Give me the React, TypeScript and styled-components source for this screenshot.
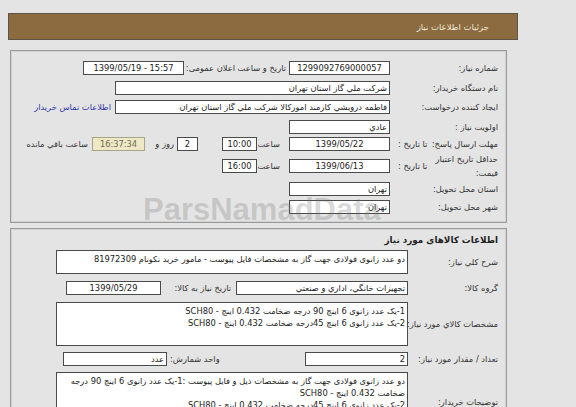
import React from 'react';
import styled, { createGlobalStyle } from 'styled-components';

const GlobalStyle = createGlobalStyle`
    html, body {
        margin: 0;
        padding: 0;
        background: #e4e4e4;
        overflow: hidden;
    }
    body {
        font-family: Tahoma, "DejaVu Sans", sans-serif;
        font-size: 8.3px;
        color: #333;
    }
`;

const App: React.FC = () => {
    return (
        <>
            <GlobalStyle />
            <Page dir="rtl">
                <TitleBar>جزئيات اطلاعات نياز</TitleBar>

                <Panel>
                    <Row h={20}>
                        <Label>شماره نياز:</Label>
                        <Field w={101} center>1299092769000057</Field>
                        <InlineLabel w={105}>تاريخ و ساعت اعلان عمومی:</InlineLabel>
                        <Field w={101} center dir="ltr">1399/05/19 - 15:57</Field>
                    </Row>
                    <Row h={19}>
                        <Label>نام دستگاه خريدار:</Label>
                        <Field w={275}>شرکت ملي گاز استان تهران</Field>
                    </Row>
                    <Row h={20}>
                        <Label>ايجاد کننده درخواست:</Label>
                        <Field w={275}>فاطمه درويشي كارمند اموركالا شركت ملي گاز استان تهران</Field>
                        <Link>اطلاعات تماس خريدار</Link>
                    </Row>
                    <Row h={19}>
                        <Label>اولويت نياز :</Label>
                        <Field w={101}>عادي</Field>
                    </Row>
                    <Row h={16}>
                        <Label>
                            مهلت ارسال پاسخ:
                            <SubLabel>تا تاريخ :</SubLabel>
                        </Label>
                        <Field w={101} center>1399/05/22</Field>
                        <InlineLabel w={32} pad={9}>ساعت</InlineLabel>
                        <Field w={35} center>10:00</Field>
                        <Spacer w={24} />
                        <Field w={21} center>2</Field>
                        <InlineLabel w={32} pad={3}>روز و</InlineLabel>
                        <Countdown>16:37:34</Countdown>
                        <InlineLabel pad={4}>ساعت باقي مانده</InlineLabel>
                    </Row>
                    <Row h={28}>
                        <Label>
                            <TwoLine>حداقل تاريخ اعتبار<br />قيمت:</TwoLine>
                            <SubLabel>تا تاريخ :</SubLabel>
                        </Label>
                        <Field w={101} center>1399/06/13</Field>
                        <InlineLabel w={32} pad={9}>ساعت</InlineLabel>
                        <Field w={35} center>16:00</Field>
                    </Row>
                    <Row h={18}>
                        <Label>استان محل تحويل:</Label>
                        <Field w={101}>تهران</Field>
                    </Row>
                    <Row h={18}>
                        <Label>شهر محل تحويل:</Label>
                        <Field w={101}>تهران</Field>
                    </Row>
                </Panel>

                <Panel second>
                    <SectionTitle>اطلاعات كالاهاي مورد نياز</SectionTitle>
                    <Row h={28} wide>
                        <Label>شرح كلي نياز:</Label>
                        <Area h={24}>دو عدد زانوی فولادی جهت گاز به مشخصات فايل پيوست  - مامور خريد نكونام 81972309</Area>
                    </Row>
                    <Row h={24} wide>
                        <Label>گروه كالا:</Label>
                        <Field w={172}>تجهيزات خانگي، اداري و صنعتي</Field>
                        <InlineLabel w={75} pad={5}>تاريخ نياز به كالا:</InlineLabel>
                        <Field w={95} center>1399/05/29</Field>
                    </Row>
                    <Row h={48} wide>
                        <Label>مشخصات كالاي مورد نياز:</Label>
                        <Area h={44}>
                            1-يک عدد زانوی 6 اينچ 90 درجه ضخامت 0.432 اينچ - SCH80{'\n'}
                            2-يک عدد زانوی 6 اينچ 45درجه ضخامت 0.432 اينچ - SCH80
                        </Area>
                    </Row>
                    <Row h={22} wide>
                        <Label>تعداد / مقدار مورد نياز:</Label>
                        <Field w={103}>2</Field>
                        <InlineLabel w={138} end>واحد شمارش:</InlineLabel>
                        <Field w={104}>عدد</Field>
                    </Row>
                    <Row h={60} wide top>
                        <Label>توضيحات خريدار:</Label>
                        <Area h={58}>
                            دو عدد زانوی فولادی جهت گاز به مشخصات ذيل و فايل پيوست :1-يک عدد زانوی 6 اينچ 90 درجه{'\n'}
                            ضخامت 0.432 اينچ - SCH80{'\n'}
                            2-يک عدد زانوی 6 اينچ 45درجه ضخامت 0.432 اينچ - SCH80
                        </Area>
                    </Row>
                </Panel>

                <Watermark>ParsNamadData</Watermark>
            </Page>
        </>
    );
};

export default App;

const Page = styled.div`
    position: relative;
    width: 510px;
    padding: 13px 0 0 8px;
`;

const TitleBar = styled.div`
    box-sizing: border-box;
    height: 27px;
    margin-bottom: 10px;
    padding-right: 28px;
    display: flex;
    align-items: center;
    background: #8b6b3f;
    border: 1px solid #5c5448;
    color: #f3ead8;
    font-size: 8.5px;
`;

const Panel = styled.div<{ second?: boolean }>`
    box-sizing: border-box;
    width: 497px;
    margin-right: 11px;
    margin-top: ${({ second }) => (second ? '5px' : '0')};
    padding: ${({ second }) => (second ? '3px 0 0 0' : '7px 0 6px 0')};
    border: 1px solid #9a9a9a;
    box-shadow: inset 0 0 0 1px #d2d2d2;
    display: flex;
    flex-direction: column;
`;

const Row = styled.div<{ h: number; wide?: boolean; top?: boolean }>`
    display: flex;
    align-items: ${({ top }) => (top ? 'flex-start' : 'center')};
    height: ${({ h }) => h}px;
    & > :first-child {
        width: ${({ wide }) => (wide ? 98 : 116)}px;
        ${({ top }) => (top ? 'align-self: center;' : '')}
    }
    ${({ top }) => (top ? 'padding-top: 2px;' : '')}
`;

const Label = styled.div`
    box-sizing: border-box;
    flex: none;
    display: flex;
    align-items: center;
    padding-right: 8px;
    color: #333;
    white-space: nowrap;
`;

const TwoLine = styled.span`
    line-height: 14px;
`;

const SubLabel = styled.span`
    margin-right: auto;
    padding-left: 8px;
`;

const SectionTitle = styled.div`
    height: 16px;
    display: flex;
    align-items: center;
    padding-right: 8px;
    font-weight: bold;
    font-size: 8.8px;
    color: #222;
`;

const Field = styled.div<{ w: number; center?: boolean }>`
    box-sizing: border-box;
    flex: none;
    width: ${({ w }) => w}px;
    height: 14px;
    padding: 0 2px;
    display: flex;
    align-items: center;
    justify-content: ${({ center }) => (center ? 'center' : 'flex-start')};
    background: #fff;
    border: 1px solid #4a4a4a;
    color: #222;
    white-space: nowrap;
    overflow: hidden;
`;

const Area = styled.div<{ h: number }>`
    box-sizing: border-box;
    flex: none;
    width: 352px;
    height: ${({ h }) => h}px;
    padding: 2px 2px;
    background: #fff;
    border: 1px solid #4a4a4a;
    color: #222;
    line-height: 12px;
    white-space: pre-line;
    overflow: hidden;
`;

const InlineLabel = styled.div<{ w?: number; pad?: number; end?: boolean }>`
    box-sizing: border-box;
    flex: none;
    ${({ w }) => (w ? `width: ${w}px;` : '')}
    padding: 0 ${({ pad }) => pad ?? 3}px;
    display: flex;
    justify-content: ${({ end }) => (end ? 'flex-end' : 'flex-start')};
    color: #333;
    white-space: nowrap;
`;

const Spacer = styled.div<{ w: number }>`
    flex: none;
    width: ${({ w }) => w}px;
`;

const Countdown = styled.div`
    box-sizing: border-box;
    flex: none;
    width: 53px;
    height: 14px;
    display: flex;
    align-items: center;
    justify-content: center;
    background: #eee9c4;
    border: 1px solid #a8a48a;
    color: #6f6a55;
`;

const Link = styled.a`
    margin-right: 4px;
    color: #2f36a8;
    white-space: nowrap;
    cursor: pointer;
`;

const Watermark = styled.div`
    position: absolute;
    left: 143px;
    top: 192px;
    font-family: "Liberation Sans", Arial, sans-serif;
    font-weight: bold;
    font-size: 31px;
    color: rgba(110, 110, 110, 0.26);
    pointer-events: none;
    direction: ltr;
`;
